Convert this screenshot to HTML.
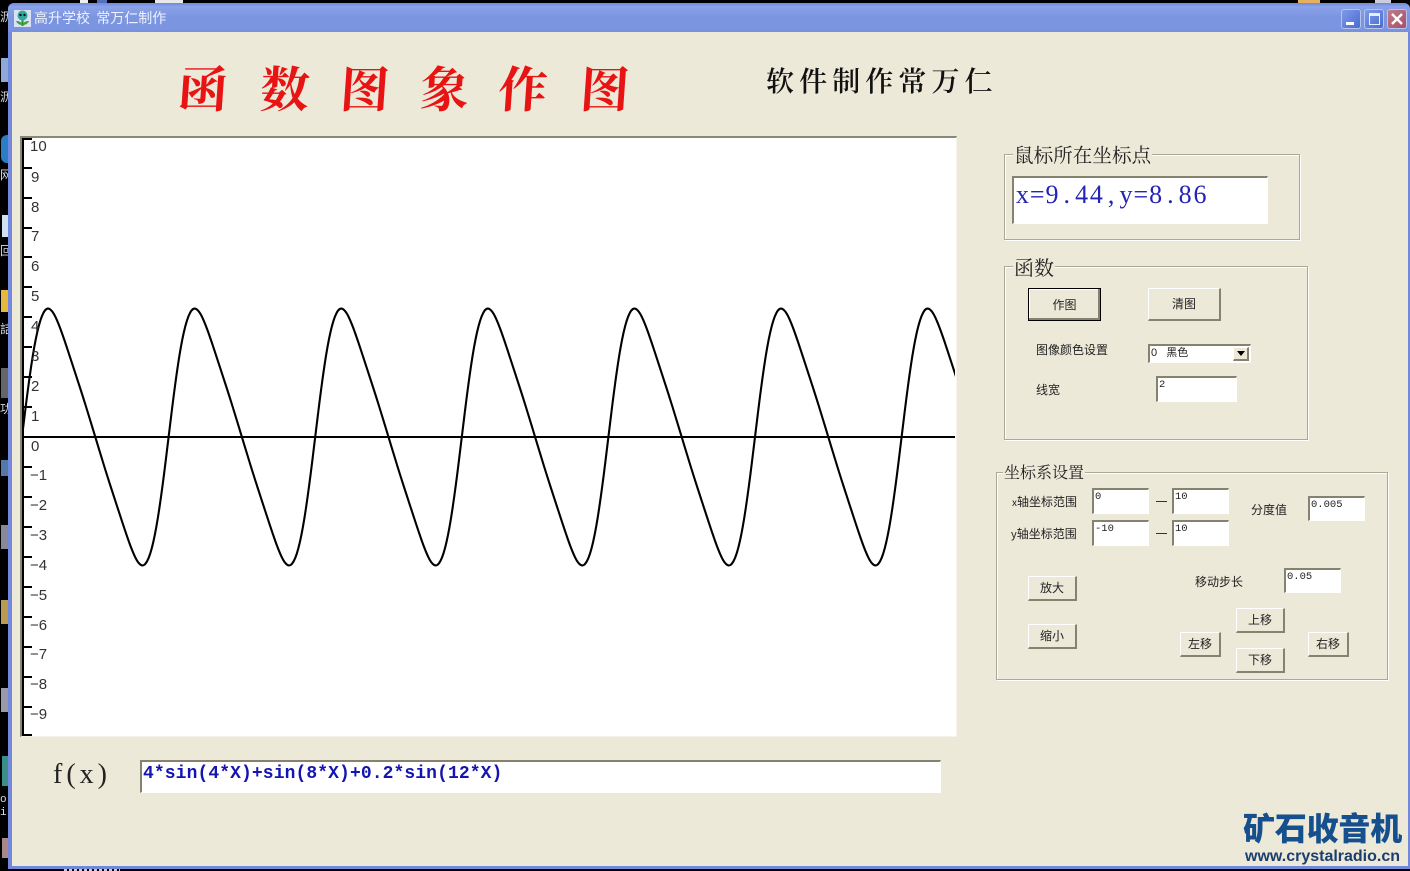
<!DOCTYPE html>
<html lang="zh">
<head>
<meta charset="utf-8">
<title>函数图象作图</title>
<style>
html,body{margin:0;padding:0;background:#000;}
body{position:relative;width:1410px;height:871px;overflow:hidden;font-family:"Liberation Sans","Noto Sans CJK SC",sans-serif;color:#111;}
.a{position:absolute;box-sizing:border-box;white-space:nowrap;}
.win{left:8px;top:3px;width:1402px;height:866px;background:#7188DC;border-radius:6px 6px 0 0;}
.client{left:12px;top:32px;width:1396px;height:834px;background:#ECE9D8;}
.tbar{left:8px;top:3px;width:1402px;height:29px;border-radius:6px 6px 0 0;background:linear-gradient(#6E88DC 0,#8AA2E8 12%,#7C95E0 50%,#7B95E2 90%,#7A90D8 100%);}
.tt{left:34px;top:8px;font:14px/20px "Noto Sans CJK SC","WenQuanYi Zen Hei",sans-serif;color:#EEF2FF;}
.wb{top:9px;width:20px;height:20px;border-radius:3px;border:1px solid #B4C4EE;background:linear-gradient(135deg,#7F9AE8,#4A6CD0);}
.cal{font-family:"Noto Serif CJK SC",serif;font-weight:700;font-size:49px;line-height:60px;color:#E81414;width:60px;text-align:center;top:57px;transform:skewX(-4deg);}
.gb{border:1px solid #ACA899;box-shadow:1px 1px 0 #fff,inset 1px 1px 0 #fff;}
.lg{background:#ECE9D8;font-family:"Noto Serif CJK SC","Noto Sans CJK SC",serif;color:#222;padding:0 1px;}
.in{background:#fff;border-style:solid;border-width:2px 1px 1px 2px;border-color:#85826F #fff #fff #85826F;font:10.5px/12px "Liberation Mono",monospace;padding:1px 0 0 1px;color:#222;}
.b{background:#ECE9D8;border-style:solid;border-width:1px 2px 2px 1px;border-color:#fff #85826F #85826F #fff;font:12px/1 "Noto Sans CJK SC",sans-serif;display:flex;align-items:center;justify-content:center;color:#222;}
.t{font:12px/16px "Noto Sans CJK SC",sans-serif;color:#222;}
.ch{display:inline-block;width:14.8px;text-align:center;}
</style>
</head>
<body>
<!-- desktop remnants -->
<div class="a" style="left:80px;top:0;width:8px;height:3px;background:#eee"></div>
<div class="a" style="left:97px;top:0;width:10px;height:3px;background:#5570c0"></div>
<div class="a" style="left:155px;top:0;width:28px;height:3px;background:#e8e8e8"></div>
<div class="a" style="left:1298px;top:0;width:22px;height:3px;background:#E5B060"></div>
<div class="a" style="left:1375px;top:0;width:16px;height:3px;background:#ccd"></div>
<div class="a" style="left:1px;top:58px;width:7px;height:24px;background:#8FA8D8"></div>
<div class="a" style="left:1px;top:135px;width:7px;height:28px;background:#2B7EC4;border-radius:6px 0 0 6px"></div>
<div class="a" style="left:2px;top:215px;width:6px;height:22px;background:#CFE0F2"></div>
<div class="a" style="left:1px;top:290px;width:7px;height:22px;background:#E4B93E"></div>
<div class="a" style="left:1px;top:368px;width:7px;height:30px;background:#666"></div>
<div class="a" style="left:1px;top:460px;width:7px;height:16px;background:#5577AA"></div>
<div class="a" style="left:1px;top:525px;width:7px;height:24px;background:#889"></div>
<div class="a" style="left:1px;top:600px;width:7px;height:24px;background:#B89A50"></div>
<div class="a" style="left:1px;top:688px;width:7px;height:24px;background:#99A"></div>
<div class="a" style="left:2px;top:756px;width:6px;height:30px;background:#3A8F88"></div>
<div class="a" style="left:2px;top:838px;width:6px;height:20px;background:#A88"></div>
<div class="a" style="left:0;top:10px;color:#ddd;font:12px/14px 'Noto Sans CJK SC',sans-serif;width:8px;overflow:hidden">沥</div>
<div class="a" style="left:0;top:90px;color:#ddd;font:12px/14px 'Noto Sans CJK SC',sans-serif;width:8px;overflow:hidden">沥</div>
<div class="a" style="left:0;top:168px;color:#ddd;font:12px/14px 'Noto Sans CJK SC',sans-serif;width:8px;overflow:hidden">网</div>
<div class="a" style="left:0;top:244px;color:#ddd;font:12px/14px 'Noto Sans CJK SC',sans-serif;width:8px;overflow:hidden">回</div>
<div class="a" style="left:0;top:322px;color:#ddd;font:12px/14px 'Noto Sans CJK SC',sans-serif;width:8px;overflow:hidden">詰</div>
<div class="a" style="left:0;top:402px;color:#ddd;font:12px/14px 'Noto Sans CJK SC',sans-serif;width:8px;overflow:hidden">功</div>
<div class="a" style="left:0;top:794px;color:#ddd;font:11px/13px 'Liberation Mono',monospace;width:8px;overflow:hidden">o<br>i</div>
<div class="a" style="left:64px;top:868px;width:56px;height:3px;background:repeating-linear-gradient(90deg,#ccc 0 3px,#000 3px 5px)"></div>

<!-- window -->
<div class="a win"></div>
<div class="a tbar"></div>
<div class="a client"></div>
<svg class="a" style="left:14px;top:10px" width="17" height="17" viewBox="0 0 17 17">
<rect width="17" height="17" fill="#D8E2F0"/>
<path d="M8.5 9V16" stroke="#2C8A2C" stroke-width="2"/>
<path d="M2 11C4 15 7 15 8.5 15C10 15 13 15 15 11C12 11 10 12 8.5 14C7 12 5 11 2 11Z" fill="#3CA03C"/>
<circle cx="8.5" cy="5.5" r="5" fill="#2FA8A0"/>
<circle cx="6.5" cy="5" r="1.2" fill="#111"/><circle cx="10.5" cy="5" r="1.2" fill="#111"/>
</svg>
<div class="a tt">高升学校&nbsp;&nbsp;常万仁制作</div>
<div class="a wb" style="left:1341px"><div class="a" style="left:4px;top:12px;width:8px;height:3px;background:#fff"></div></div>
<div class="a wb" style="left:1364px"><div class="a" style="left:4px;top:3px;width:11px;height:12px;border:1px solid #E8EEFF;border-top-width:3px"></div></div>
<div class="a wb" style="left:1387px;background:linear-gradient(135deg,#C07C88,#A84E68)">
<svg class="a" style="left:2px;top:2px" width="14" height="14" viewBox="0 0 14 14"><path d="M2 2L12 12M12 2L2 12" stroke="#fff" stroke-width="2.4"/></svg></div>

<!-- calligraphic title -->
<div class="a cal" style="left:173px">函</div>
<div class="a cal" style="left:255px">数</div>
<div class="a cal" style="left:335px">图</div>
<div class="a cal" style="left:415px">象</div>
<div class="a cal" style="left:493px">作</div>
<div class="a cal" style="left:575px">图</div>
<div class="a" style="left:766px;top:60px;font:600 28px/40px 'Noto Serif CJK SC',serif;letter-spacing:5.1px;color:#111">软件制作常万仁</div>

<!-- plot -->
<div class="a" style="left:20px;top:136px;width:937px;height:601px;background:#fff;border-style:solid;border-width:2px 1px 1px 2px;border-color:#8A8775 #F6F4EA #F6F4EA #8A8775"></div>
<svg class="a" style="left:0;top:0" width="1410" height="871">
<defs>
<clipPath id="pc"><rect x="22" y="138" width="933" height="598"/></clipPath>
<path id="wave" fill="none" stroke="#000" stroke-width="2.1" d="M3.05 412Q6.11 387 9.16 366.3Q12.22 345.6 15.27 332.15Q18.33 318.7 21.38 312.95Q24.43 307.2 27.49 308.9Q30.54 310.6 33.6 317.2Q36.65 323.8 39.7 332.4Q42.76 341 45.8 350.3Q48.87 359.6 51.9 368.95Q54.98 378.3 58.03 387.75Q61.08 397.2 64.13 407Q67.19 416.8 70.25 426.9Q73.3 437 76.35 447.1Q79.41 457.2 82.46 467Q85.52 476.8 88.57 486.25Q91.63 495.7 94.68 505.05Q97.73 514.4 100.79 523.7Q103.84 533 106.9 541.6Q109.95 550.2 113 556.8Q116.06 563.4 119.1 565.1Q122.17 566.8 125.2 561.05Q128.28 555.3 131.33 541.85Q134.38 528.4 137.43 507.7Q140.49 487 143.55 462Q146.6 437 149.65 412"/>
</defs>
<path d="M23 138V736" stroke="#000" stroke-width="2"/>
<path fill="none" stroke="#000" stroke-width="2" d="M23 139H32M23 168H32M23 198H32M23 228H32M23 257H32M23 287H32M23 317H32M23 347H32M23 377H32M23 407H32M23 467H32M23 497H32M23 527H32M23 557H32M23 587H32M23 617H32M23 647H32M23 677H32M23 707H32M23 735H32"/>
<path d="M22 437H955" stroke="#000" stroke-width="2"/>
<g clip-path="url(#pc)">
<use href="#wave" x="-124.6"/><use href="#wave" x="22"/><use href="#wave" x="168.6"/><use href="#wave" x="315.2"/><use href="#wave" x="461.8"/><use href="#wave" x="608.4"/><use href="#wave" x="755"/><use href="#wave" x="901.6"/>
</g>
<g font-family="Liberation Sans,sans-serif" font-size="15" fill="#333">
<text x="30" y="151">10</text><text x="31" y="182">9</text><text x="31" y="212">8</text><text x="31" y="241">7</text><text x="31" y="271">6</text><text x="31" y="301">5</text><text x="31" y="331">4</text><text x="31" y="361">3</text><text x="31" y="391">2</text><text x="31" y="421">1</text><text x="31" y="451">0</text>
<text x="30" y="480">−1</text><text x="30" y="510">−2</text><text x="30" y="540">−3</text><text x="30" y="570">−4</text><text x="30" y="600">−5</text><text x="30" y="630">−6</text><text x="30" y="659">−7</text><text x="30" y="689">−8</text><text x="30" y="719">−9</text>
</g>
</svg>

<!-- f(x) -->
<div class="a" style="left:53px;top:758px;font:28px/34px 'Liberation Serif',serif;color:#222;letter-spacing:4px">f(x)</div>
<div class="a in" style="left:140px;top:760px;width:801px;height:33px;font:bold 18px/22px 'Liberation Mono',monospace;color:#1414B0;letter-spacing:.09px;padding:1px 0 0 1px">4*sin(4*X)+sin(8*X)+0.2*sin(12*X)</div>

<!-- group 1 -->
<div class="a gb" style="left:1004px;top:154px;width:296px;height:86px"></div>
<div class="a lg" style="left:1013px;top:141px;font-size:19.6px;line-height:26px">鼠标所在坐标点</div>
<div class="a in" style="left:1012px;top:176px;width:256px;height:48px;font:26px/32px 'Liberation Serif',serif;color:#2424B4;padding:1px 0 0 1px"><span class="ch">x</span><span class="ch">=</span><span class="ch">9</span><span class="ch">.</span><span class="ch">4</span><span class="ch">4</span><span class="ch">,</span><span class="ch">y</span><span class="ch">=</span><span class="ch">8</span><span class="ch">.</span><span class="ch">8</span><span class="ch">6</span></div>

<!-- group 2 -->
<div class="a gb" style="left:1004px;top:266px;width:304px;height:174px"></div>
<div class="a lg" style="left:1013px;top:254px;font-size:20px;line-height:26px">函数</div>
<div class="a b" style="left:1028px;top:288px;width:73px;height:33px;border:1px solid #000;box-shadow:inset -2px -2px 0 #85826F,inset 1px 1px 0 #fff">作图</div>
<div class="a b" style="left:1148px;top:288px;width:73px;height:33px">清图</div>
<div class="a t" style="left:1036px;top:342px">图像颜色设置</div>
<div class="a in" style="left:1148px;top:344px;width:103px;height:19px;font:11px/14px 'Liberation Sans','Noto Sans CJK SC',sans-serif;padding:0 0 0 1px">0&nbsp;&nbsp;&nbsp;黑色
<div class="a b" style="left:83px;top:1px;width:16px;height:14px"><svg width="8" height="5"><path d="M0 0H8L4 5Z" fill="#000"/></svg></div></div>
<div class="a t" style="left:1036px;top:382px">线宽</div>
<div class="a in" style="left:1156px;top:376px;width:81px;height:26px">2</div>

<!-- group 3 -->
<div class="a gb" style="left:996px;top:472px;width:392px;height:208px"></div>
<div class="a lg" style="left:1003px;top:461px;font-size:16px;line-height:22px">坐标系设置</div>
<div class="a t" style="left:1012px;top:494px"><span style="font-size:10px">x</span>轴坐标范围</div>
<div class="a t" style="left:1011px;top:526px"><span style="font-size:11px">y</span>轴坐标范围</div>
<div class="a in" style="left:1092px;top:488px;width:57px;height:26px">0</div>
<div class="a in" style="left:1172px;top:488px;width:57px;height:26px">10</div>
<div class="a in" style="left:1092px;top:520px;width:57px;height:26px">-10</div>
<div class="a in" style="left:1172px;top:520px;width:57px;height:26px">10</div>
<div class="a" style="left:1156px;top:501px;width:11px;height:1px;background:#333"></div>
<div class="a" style="left:1156px;top:533px;width:11px;height:1px;background:#333"></div>
<div class="a t" style="left:1251px;top:502px">分度值</div>
<div class="a in" style="left:1308px;top:496px;width:57px;height:25px">0.005</div>
<div class="a t" style="left:1195px;top:574px">移动步长</div>
<div class="a in" style="left:1284px;top:568px;width:57px;height:25px">0.05</div>
<div class="a b" style="left:1028px;top:576px;width:49px;height:25px">放大</div>
<div class="a b" style="left:1028px;top:624px;width:49px;height:25px">缩小</div>
<div class="a b" style="left:1180px;top:632px;width:41px;height:25px">左移</div>
<div class="a b" style="left:1236px;top:608px;width:49px;height:25px">上移</div>
<div class="a b" style="left:1236px;top:648px;width:49px;height:25px">下移</div>
<div class="a b" style="left:1308px;top:632px;width:41px;height:25px">右移</div>

<!-- watermark -->
<div class="a" style="left:1243px;top:805px;font:900 32px/44px 'Noto Sans CJK SC',sans-serif;color:#154F8E;letter-spacing:-.2px">矿石收音机</div>
<div class="a" style="left:1245px;top:848px;font:bold 16px/18px 'Liberation Sans',sans-serif;color:#1B3E6E">www.crystalradio.cn</div>
</body>
</html>
